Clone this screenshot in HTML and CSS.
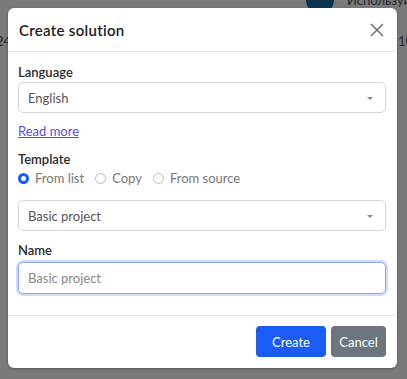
FILE: index.html
```html
<!DOCTYPE html>
<html lang="en">
<head>
  <meta charset="UTF-8">
  <meta name="viewport" content="width=device-width, initial-scale=1.0">
  <title>Create solution</title>
  <link rel="stylesheet" href="styles.css">
</head>
<body>
  <!-- page content behind the overlay -->
  <div class="page">
    <span class="bg-avatar"></span>
    <span class="bg-text bg-hint">Используйте</span>
    <span class="bg-text bg-num-left">24</span>
    <span class="bg-text bg-num-right">10</span>
  </div>

  <div class="overlay">
    <div class="modal">
      <div class="modal-header">
        <h2 class="modal-title">Create solution</h2>
        <button class="close-btn" aria-label="Close">
          <svg width="14" height="14" viewBox="0 0 14 14">
            <path d="M1 1 L13 13 M13 1 L1 13" stroke="#666" stroke-width="1.4" fill="none"/>
          </svg>
        </button>
      </div>

      <div class="modal-body">
        <label class="field-label">Language</label>
        <div class="select">
          <span>English</span>
          <span class="caret"></span>
        </div>

        <a class="read-more" href="#">Read more</a>

        <label class="field-label template-label">Template</label>
        <div class="radios">
          <label class="radio"><span class="radio-dot checked"></span>From list</label>
          <label class="radio"><span class="radio-dot"></span>Copy</label>
          <label class="radio"><span class="radio-dot"></span>From source</label>
        </div>

        <div class="select select-template">
          <span>Basic project</span>
          <span class="caret"></span>
        </div>

        <label class="field-label name-label">Name</label>
        <input class="text-input" type="text" placeholder="Basic project">
      </div>

      <div class="modal-footer">
        <button class="btn btn-primary">Create</button>
        <button class="btn btn-secondary">Cancel</button>
      </div>
    </div>
  </div>
</body>
</html>
```
FILE: styles.css
```css
* {
  margin: 0;
  padding: 0;
  box-sizing: border-box;
}

body {
  font-family: 'Lato', 'Noto Sans', sans-serif;
  width: 407px;
  height: 379px;
  background: #fff;
  overflow: hidden;
  position: relative;
  color: #222;
}

.page {
  position: absolute;
  inset: 0;
}

.bg-avatar {
  position: absolute;
  left: 306px;
  top: -14px;
  width: 28px;
  height: 28px;
  border-radius: 50%;
  background: #1f6fa8;
}

.bg-text {
  position: absolute;
  font-size: 13px;
  color: #555;
  white-space: nowrap;
}

.bg-hint {
  left: 347px;
  top: -8px;
}

.bg-num-left {
  left: -4px;
  top: 33px;
}

.bg-num-right {
  left: 398px;
  top: 33px;
}

.overlay {
  position: absolute;
  inset: 0;
  background: rgba(0, 0, 0, 0.52);
  padding: 8px 10px 11px 8px;
}

.modal {
  width: 389px;
  height: 360px;
  background: #fff;
  border-radius: 6px;
  display: flex;
  flex-direction: column;
  box-shadow: 0 1px 3px rgba(0, 0, 0, 0.3);
}

.modal-header {
  height: 44px;
  display: flex;
  align-items: center;
  justify-content: space-between;
  padding: 0 10px 0 11px;
  border-bottom: 1px solid #e3e6ea;
}

.modal-title {
  font-size: 15px;
  font-weight: 600;
  color: #1c1c1c;
  letter-spacing: 0.3px;
}

.close-btn {
  border: none;
  background: none;
  width: 20px;
  height: 20px;
  display: flex;
  align-items: center;
  justify-content: center;
  margin-top: 1px;
}

.modal-body {
  flex: 1;
  display: flex;
  flex-direction: column;
  align-items: flex-start;
  padding: 12px 11px 0 10px;
  border-bottom: 1px solid #e3e6ea;
}

.field-label {
  font-size: 13px;
  font-weight: 600;
  line-height: 16px;
  color: #2a2a2a;
  margin-bottom: 2px;
}

.select {
  width: 100%;
  height: 31px;
  border: 1px solid #d4d7db;
  border-radius: 5px;
  display: flex;
  align-items: center;
  justify-content: space-between;
  padding: 0 12px 0 9px;
  font-size: 13px;
  color: #555;
}

.caret {
  width: 0;
  height: 0;
  border-left: 3px solid transparent;
  border-right: 3px solid transparent;
  border-top: 3px solid #888;
  margin-top: 2px;
}

.read-more {
  margin-top: 10px;
  font-size: 13px;
  line-height: 16px;
  color: #5b4fd6;
  text-decoration: underline;
}

.template-label {
  margin-top: 12px;
  margin-bottom: 3px;
}

.radios {
  display: flex;
  gap: 11px;
  height: 16px;
  align-items: center;
}

.radio {
  display: flex;
  align-items: center;
  gap: 6px;
  font-size: 13px;
  color: #777;
}

.radio-dot {
  width: 11px;
  height: 11px;
  border-radius: 50%;
  border: 1px solid #bbb;
  background: #fff;
}

.radio-dot.checked {
  border: 3px solid #1a5cf5;
}

.select-template {
  margin-top: 14px;
}

.name-label {
  margin-top: 11px;
  margin-bottom: 4px;
}

.text-input {
  width: 100%;
  height: 32px;
  border: 1px solid #8ea8f0;
  border-radius: 5px;
  box-shadow: 0 0 0 2px rgba(60, 110, 240, 0.25);
  padding: 0 9px;
  font-family: inherit;
  font-size: 13px;
  outline: none;
}

.text-input::placeholder {
  color: #888;
}

.modal-footer {
  display: flex;
  justify-content: flex-end;
  gap: 5px;
  padding: 10px 11px 11px;
}

.btn {
  height: 31px;
  border: none;
  border-radius: 4px;
  font-family: inherit;
  font-size: 13px;
  color: #fff;
}

.btn-primary {
  width: 70px;
  background: #1a5cf5;
}

.btn-secondary {
  width: 55px;
  background: #6c757d;
}
```
